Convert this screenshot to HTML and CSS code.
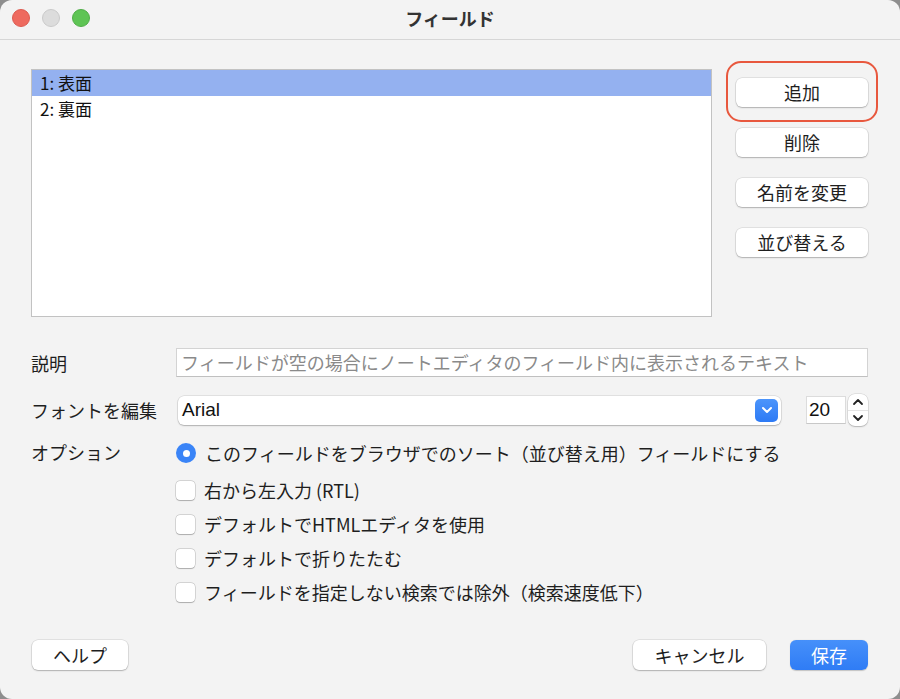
FILE: index.html
```html
<!DOCTYPE html>
<html lang="ja">
<head>
<meta charset="utf-8">
<title>フィールド</title>
<link rel="stylesheet" href="styles.css">
</head>
<body>
<div class="window">
  <div class="titlebar">
    <div class="lights">
      <span class="light red"></span>
      <span class="light gray"></span>
      <span class="light green"></span>
    </div>
    <div class="title">フィールド</div>
  </div>
  <div class="content">
    <div class="top">
      <div class="list">
        <div class="row selected">1: 表面</div>
        <div class="row">2: 裏面</div>
      </div>
      <div class="side">
        <div class="focus-ring"><button class="btn side-btn">追加</button></div>
        <button class="btn side-btn">削除</button>
        <button class="btn side-btn">名前を変更</button>
        <button class="btn side-btn">並び替える</button>
      </div>
    </div>
    <div class="form">
      <div class="label">説明</div>
      <div class="textfield">フィールドが空の場合にノートエディタのフィールド内に表示されるテキスト</div>

      <div class="label">フォントを編集</div>
      <div class="fontrow">
        <div class="select">
          <span>Arial</span>
          <span class="chev"><svg width="12" height="8" viewBox="0 0 12 8"><path d="M2 2 L6 6 L10 2" fill="none" stroke="#fff" stroke-width="2" stroke-linecap="round" stroke-linejoin="round"/></svg></span>
        </div>
        <div class="num">20</div>
        <div class="stepper">
          <div class="step"><svg width="12" height="9" viewBox="0 0 12 9"><path d="M2 7 L6 3 L10 7" fill="none" stroke="#222" stroke-width="1.8" stroke-linecap="round" stroke-linejoin="round"/></svg></div>
          <div class="step"><svg width="12" height="9" viewBox="0 0 12 9"><path d="M2 2 L6 6 L10 2" fill="none" stroke="#222" stroke-width="1.8" stroke-linecap="round" stroke-linejoin="round"/></svg></div>
        </div>
      </div>

      <div class="label opt-label">オプション</div>
      <div class="options">
        <div class="opt first"><span class="radio"></span>このフィールドをブラウザでのソート（並び替え用）フィールドにする</div>
        <div class="opt"><span class="check"></span>右から左入力 (RTL)</div>
        <div class="opt"><span class="check"></span>デフォルトでHTMLエディタを使用</div>
        <div class="opt"><span class="check"></span>デフォルトで折りたたむ</div>
        <div class="opt"><span class="check"></span>フィールドを指定しない検索では除外（検索速度低下）</div>
      </div>
    </div>
    <div class="bottom">
      <button class="btn help">ヘルプ</button>
      <div class="right">
        <button class="btn cancel">キャンセル</button>
        <button class="btn primary">保存</button>
      </div>
    </div>
  </div>
</div>
</body>
</html>
```
FILE: styles.css
```css
html, body {
  margin: 0;
  padding: 0;
  background: #8e8e8e;
}
body {
  font-family: "Noto Sans CJK JP", "Noto Sans", sans-serif;
  color: #1e1e1e;
  font-size: 18px;
}
.window {
  width: 900px;
  height: 699px;
  background: #f3f3f3;
  border-radius: 12px;
  overflow: hidden;
  display: flex;
  flex-direction: column;
  box-sizing: border-box;
}
.titlebar {
  height: 39px;
  border-bottom: 1px solid #d6d6d6;
  position: relative;
  display: flex;
  align-items: center;
  justify-content: center;
  flex-shrink: 0;
}
.lights {
  position: absolute;
  left: 12px;
  top: 9px;
  display: flex;
  gap: 12px;
}
.light {
  width: 18px;
  height: 18px;
  border-radius: 50%;
  box-sizing: border-box;
}
.red { background: #ee6a5f; border: 1px solid #dc5a50; }
.gray { background: #dcdcdc; border: 1px solid #c9c9c9; }
.green { background: #5ec454; border: 1px solid #50ad47; }
.title {
  font-size: 18px;
  font-weight: bold;
  color: #333;
  margin-top: -3px;
}
.content {
  padding: 29px 32px 0 31px;
  display: flex;
  flex-direction: column;
  flex: 1;
}
.top {
  display: flex;
  gap: 24px;
}
.list {
  width: 681px;
  height: 248px;
  box-sizing: border-box;
  border: 1px solid #c2c2c2;
  background: #fff;
}
.row {
  height: 26px;
  line-height: 26px;
  padding-left: 8px;
  font-size: 17px;
  color: #111;
}
.row.selected {
  background: #94b1f0;
}
.side {
  display: flex;
  flex-direction: column;
  padding-top: 9px;
  gap: 21px;
}
.focus-ring {
  position: relative;
}
.focus-ring::after {
  content: "";
  position: absolute;
  left: -10px;
  right: -10px;
  top: -17px;
  bottom: -15px;
  border: 2.5px solid #e8583e;
  border-radius: 15px;
  pointer-events: none;
}
.btn {
  font-family: inherit;
  font-size: 18px;
  color: #1e1e1e;
  background: #fff;
  border: none;
  border-radius: 6px;
  box-shadow: 0 0 0 0.5px rgba(0,0,0,0.14), 0 1px 1.5px rgba(0,0,0,0.22);
  height: 29px;
  padding: 0;
  line-height: 29px;
}
.side-btn {
  width: 132px;
  display: block;
}
.form {
  margin-top: 31px;
  display: grid;
  grid-template-columns: 145px 1fr;
  row-gap: 17px;
  align-items: center;
}
.label {
  font-size: 18px;
  color: #1e1e1e;
}
.textfield {
  height: 29px;
  box-sizing: border-box;
  border: 1px solid #d3d3d3;
  border-bottom-color: #c0c0c0;
  background: #fff;
  color: #8a8a8a;
  font-size: 18px;
  line-height: 27px;
  padding-left: 4px;
  white-space: nowrap;
  overflow: hidden;
}
.fontrow {
  display: flex;
  align-items: center;
  padding-left: 2px;
}
.select {
  width: 603px;
  height: 29px;
  background: #fff;
  border-radius: 6px;
  box-shadow: 0 0 0 0.5px rgba(0,0,0,0.14), 0 1px 1.5px rgba(0,0,0,0.22);
  display: flex;
  align-items: center;
  justify-content: space-between;
  padding: 0 3px 0 4px;
  box-sizing: border-box;
  font-family: "Liberation Sans", "Noto Sans", sans-serif;
  font-size: 19px;
  color: #111;
}
.chev {
  width: 23px;
  height: 23px;
  border-radius: 5px;
  background: linear-gradient(#4c95fb, #2d7af5);
  display: flex;
  align-items: center;
  justify-content: center;
}
.num {
  margin-left: 25px;
  width: 40px;
  height: 28px;
  box-sizing: border-box;
  background: #fff;
  border: 1px solid #dcdcdc;
  border-bottom-color: #c8c8c8;
  font-family: "Liberation Sans", sans-serif;
  font-size: 19px;
  line-height: 26px;
  padding-left: 2px;
  color: #111;
}
.stepper {
  margin-left: 2px;
  width: 20px;
  height: 32px;
  background: #fff;
  border-radius: 7px;
  box-shadow: 0 0 0 0.5px rgba(0,0,0,0.14), 0 1px 1.5px rgba(0,0,0,0.2);
  display: flex;
  flex-direction: column;
}
.step {
  flex: 1;
  display: flex;
  align-items: center;
  justify-content: center;
}
.step:first-child {
  border-bottom: 1px solid #e4e4e4;
}
.step svg { display: block; }
.opt-label {
  align-self: start;
  line-height: 22px;
  margin-top: -2px;
}
.options {
  display: flex;
  flex-direction: column;
  gap: 12px;
  margin-top: -1px;
}
.opt {
  display: flex;
  align-items: center;
  height: 22px;
  font-size: 18px;
  color: #1e1e1e;
  white-space: nowrap;
}
.opt.first {
  margin-bottom: 3px;
}
.radio {
  width: 20px;
  height: 20px;
  border-radius: 50%;
  background: #3a84f7;
  box-sizing: border-box;
  margin: 0 9px 0 0;
  position: relative;
  flex-shrink: 0;
}
.radio::after {
  content: "";
  position: absolute;
  left: 6.5px;
  top: 6.5px;
  width: 7px;
  height: 7px;
  border-radius: 50%;
  background: #fff;
}
.check {
  width: 19px;
  height: 19px;
  border-radius: 4px;
  background: #fff;
  box-shadow: 0 0 0 0.5px rgba(0,0,0,0.22), 0 0.5px 1px rgba(0,0,0,0.2);
  margin: 0 9px 0 0;
  flex-shrink: 0;
}
.bottom {
  margin-top: auto;
  margin-bottom: 29px;
  display: flex;
  justify-content: space-between;
  align-items: center;
  padding-left: 1px;
}
.help { width: 96px; height: 30px; }
.right { display: flex; gap: 24px; }
.cancel { width: 133px; height: 30px; }
.primary {
  width: 78px;
  height: 30px;
  background: linear-gradient(#4690fa, #2f7cf5);
  color: #fff;
  box-shadow: 0 0.5px 1px rgba(0,0,0,0.2);
}
```
